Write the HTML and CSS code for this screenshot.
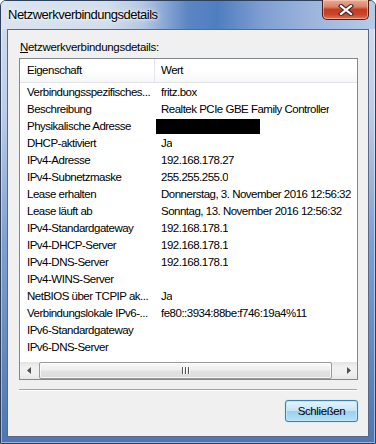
FILE: index.html
```html
<!DOCTYPE html>
<html lang="de">
<head>
<meta charset="utf-8">
<title>Netzwerkverbindungsdetails</title>
<link rel="stylesheet" href="styles.css">
</head>
<body>
<div class="window">
  <div class="titlebar">
    <span class="title">Netzwerkverbindungsdetails</span>
    <div class="close">
      <svg width="16" height="12" viewBox="0 0 16 12">
        <path d="M3 2 L13 10 M13 2 L3 10" stroke="#3a2a2a" stroke-width="4.2" stroke-linecap="square"/>
        <path d="M3 2 L13 10 M13 2 L3 10" stroke="#fff" stroke-width="2.2" stroke-linecap="square"/>
      </svg>
    </div>
  </div>
  <div class="client">
    <div class="label"><span class="u">N</span>etzwerkverbindungsdetails:</div>
    <div class="list">
      <div class="head">
        <div class="hcell c1">Eigenschaft</div>
        <div class="hcell c2">Wert</div>
      </div>
      <div class="rows">
        <div class="row"><span class="c1">Verbindungsspezifisches...</span><span class="c2">fritz.box</span></div>
        <div class="row"><span class="c1">Beschreibung</span><span class="c2">Realtek PCIe GBE Family Controller</span></div>
        <div class="row"><span class="c1">Physikalische Adresse</span><span class="c2 redact"><span class="blk"></span></span></div>
        <div class="row"><span class="c1">DHCP-aktiviert</span><span class="c2">Ja</span></div>
        <div class="row"><span class="c1">IPv4-Adresse</span><span class="c2">192.168.178.27</span></div>
        <div class="row"><span class="c1">IPv4-Subnetzmaske</span><span class="c2">255.255.255.0</span></div>
        <div class="row"><span class="c1">Lease erhalten</span><span class="c2">Donnerstag, 3. November 2016 12:56:32</span></div>
        <div class="row"><span class="c1">Lease läuft ab</span><span class="c2">Sonntag, 13. November 2016 12:56:32</span></div>
        <div class="row"><span class="c1">IPv4-Standardgateway</span><span class="c2">192.168.178.1</span></div>
        <div class="row"><span class="c1">IPv4-DHCP-Server</span><span class="c2">192.168.178.1</span></div>
        <div class="row"><span class="c1">IPv4-DNS-Server</span><span class="c2">192.168.178.1</span></div>
        <div class="row"><span class="c1">IPv4-WINS-Server</span><span class="c2"></span></div>
        <div class="row"><span class="c1">NetBIOS über TCPIP ak...</span><span class="c2">Ja</span></div>
        <div class="row"><span class="c1">Verbindungslokale IPv6-...</span><span class="c2">fe80::3934:88be:f746:19a4%11</span></div>
        <div class="row"><span class="c1">IPv6-Standardgateway</span><span class="c2"></span></div>
        <div class="row"><span class="c1">IPv6-DNS-Server</span><span class="c2"></span></div>
      </div>
      <div class="hscroll">
        <div class="arrow left"><svg width="4" height="7" viewBox="0 0 4 7"><path d="M4 0 L0 3.5 L4 7 Z" fill="#505050"/></svg></div>
        <div class="track">
          <div class="thumb"><span class="grip"></span><span class="grip"></span><span class="grip"></span></div>
        </div>
        <div class="arrow right"><svg width="4" height="7" viewBox="0 0 4 7"><path d="M0 0 L4 3.5 L0 7 Z" fill="#505050"/></svg></div>
      </div>
    </div>
    <div class="sep"></div>
    <div class="actions">
      <button class="btn">Schließen</button>
    </div>
  </div>
</div>
</body>
</html>
```
FILE: styles.css
```css
html, body {
  margin: 0;
  padding: 0;
  background: #ffffff;
}
body {
  width: 376px;
  height: 444px;
  font-family: "Liberation Sans", Arial, sans-serif;
  font-size: 11.5px;
  letter-spacing: -0.5px;
  color: #000;
}
.window {
  box-sizing: border-box;
  width: 376px;
  height: 444px;
  border: 1px solid #2e3f5c;
  border-radius: 6px 6px 0 0;
  padding: 0 6px 6px 6px;
  display: flex;
  flex-direction: column;
  background: linear-gradient(to bottom, #d5e0ee 0%, #bccde6 25%, #7f9fcf 55%, #4f76b0 100%);
  box-shadow: inset 0 0 0 1px rgba(255,255,255,0.45);
}
.titlebar {
  height: 28px;
  margin: 0 -6px;
  padding: 0 6px 0 7px;
  display: flex;
  justify-content: space-between;
  align-items: flex-start;
  border-radius: 5px 5px 0 0;
  background: linear-gradient(to right, #dbe4ef 0%, #d3deec 28%, #b4c7e3 38%, #5a86c4 50%, #4f7ec0 58%, #7f9fd2 70%, #9ab3dc 82%, #b7cbe7 100%);
}
.title {
  margin-top: 6px;
  font-size: 13px;
  line-height: 16px;
  letter-spacing: -0.5px;
  color: #000;
  text-shadow: 0 0 6px rgba(255,255,255,0.9), 0 0 3px rgba(255,255,255,0.9);
}
.close {
  width: 47px;
  height: 20px;
  margin-top: -1px;
  box-sizing: border-box;
  border: 1px solid #4a1f18;
  border-top: none;
  border-radius: 0 0 5px 5px;
  background: linear-gradient(to bottom, #eba894 0%, #dc8469 35%, #c63c20 50%, #c8442a 75%, #dd7556 100%);
  box-shadow: inset 0 0 0 1px rgba(255,220,210,0.5);
  display: flex;
  align-items: center;
  justify-content: center;
}
.client {
  flex: 1;
  border: 1px solid #58678a;
  background: #f0f0f0;
  padding: 9px 10px 0 11px;
  display: flex;
  flex-direction: column;
}
.label {
  line-height: 16px;
  padding-left: 1px;
  height: 16px;
  letter-spacing: -0.3px;
}
.u { text-decoration: underline; }
.list {
  margin-top: 3px;
  height: 322px;
  box-sizing: border-box;
  border: 1px solid #828790;
  background: #fff;
  display: flex;
  flex-direction: column;
  overflow: hidden;
}
.head {
  height: 24px;
  flex-shrink: 0;
  box-sizing: border-box;
  border-bottom: 1px solid #e2e4e8;
  display: flex;
  background: linear-gradient(to bottom, #ffffff 0%, #ffffff 50%, #f6f7f9 100%);
}
.hcell {
  line-height: 23px;
  white-space: nowrap;
}
.hcell.c1 {
  width: 127px;
  flex-shrink: 0;
  padding-left: 7px;
  border-right: 1px solid #e3e5e9;
}
.hcell.c2 {
  padding-left: 6px;
}
.rows {
  padding-top: 1px;
}
.row {
  display: flex;
  height: 17px;
  line-height: 17px;
  white-space: nowrap;
}
.row .c1 {
  width: 128px;
  flex-shrink: 0;
  padding-left: 7px;
  overflow: hidden;
}
.row .c2 {
  padding-left: 6px;
  overflow: hidden;
}
.row .c2.redact {
  padding-left: 1px;
  display: flex;
  align-items: center;
}
.blk {
  display: block;
  width: 104px;
  height: 15px;
  background: #000;
}
.hscroll {
  margin-top: auto;
  height: 17px;
  flex-shrink: 0;
  display: flex;
  background: linear-gradient(to bottom, #e3e3e3 0%, #f0f0f0 30%, #f0f0f0 70%, #e6e6e6 100%);
}
.arrow {
  width: 17px;
  display: flex;
  align-items: center;
  justify-content: center;
}
.track {
  flex: 1;
  display: flex;
  align-items: stretch;
  padding: 0 2px;
}
.thumb {
  width: 293px;
  box-sizing: border-box;
  border: 1px solid #9a9a9a;
  border-radius: 2px;
  background: linear-gradient(to bottom, #f8f8f8 0%, #efefef 45%, #e2e2e2 55%, #dcdcdc 100%);
  box-shadow: inset 0 0 0 1px rgba(255,255,255,0.7);
  display: flex;
  justify-content: center;
  align-items: center;
  gap: 2px;
}
.grip {
  width: 1px;
  height: 7px;
  background: #555;
  box-shadow: 1px 0 0 #fff;
}
.sep {
  margin-top: 9px;
  height: 1px;
  background: #a0a0a0;
  border-bottom: 1px solid #ffffff;
  margin-right: 1px;
}
.actions {
  display: flex;
  justify-content: flex-end;
  margin-top: 9px;
}
.btn {
  width: 73px;
  height: 22px;
  box-sizing: border-box;
  border: 1px solid #3c7fb1;
  border-radius: 3px;
  background: linear-gradient(to bottom, #e5f4fc 0%, #c4e5f6 50%, #98d1ef 51%, #b6e0f5 100%);
  box-shadow: inset 0 0 0 1px #bfe6fb, 0 0 1px #6fc0ea;
  font-family: "Liberation Sans", Arial, sans-serif;
  font-size: 11.5px;
  letter-spacing: -0.4px;
  color: #000;
  padding: 0;
  line-height: 20px;
}
```
